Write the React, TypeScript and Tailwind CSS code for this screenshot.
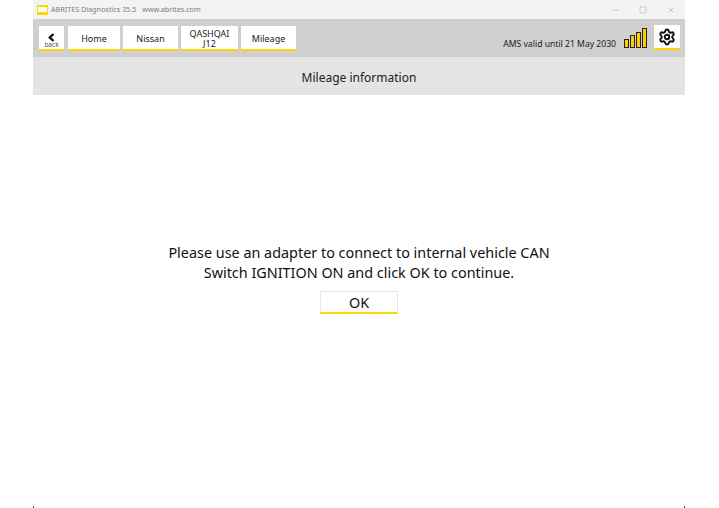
import { Minus, Settings, Square, X } from 'lucide-react';

const crumbs = [
   { label: 'Home', width: 'w-[52px]' },
   { label: 'Nissan', width: 'w-[55px]' },
   { label: 'QASHQAI J12', width: 'w-[57px]' },
   { label: 'Mileage', width: 'w-[55px]' },
];

const bars = ['h-[9px]', 'h-[13px]', 'h-[16px]', 'h-[20px]'];

export default function App() {
   return (
      <div className="h-[508px] w-[719px] bg-white pl-[33px] pr-[34px] font-['Noto_Sans',sans-serif] text-[#222]">
         <div className="relative flex h-[508px] flex-col">
            {/* Title bar */}
            <div className="flex h-[19px] items-center bg-[#f3f3f3] pl-[4px]">
               <div className="flex h-[10px] w-[11px] items-center justify-center rounded-[1px] border-x border-t-2 border-b-[3px] border-[#fdd800] bg-white" />
               <span className="ml-[3px] text-[7.2px] text-[#7c7c7c]">ABRITES Diagnostics 35.5</span>
               <span className="ml-[6px] text-[7.2px] text-[#7c7c7c]">www.abrites.com</span>
               <div className="ml-auto flex items-center text-[#8c8c8c]">
                  <Minus size={10} strokeWidth={1} />
                  <Square size={8} strokeWidth={1} className="ml-[19px]" />
                  <X size={10} strokeWidth={1} className="ml-[19px] mr-[9px]" />
               </div>
            </div>

            {/* Toolbar */}
            <div className="flex h-[38px] items-center bg-[#cfcfcf] pl-[6px] pr-[5px]">
               <button className="flex h-[25px] w-[25px] flex-col items-center justify-end border-b-2 border-[#fdd800] bg-white">
                  <svg width="7" height="9" viewBox="0 0 7 9" className="mb-[-1px]">
                     <path d="M5.5 1 L1.8 4.5 L5.5 8" fill="none" stroke="#111" strokeWidth="2.4" />
                  </svg>
                  <span className="text-[6.5px] leading-[8px] text-[#556]">back</span>
               </button>
               <div className="ml-[4px] flex gap-[3px]">
                  {crumbs.map((crumb) => (
                     <button
                        key={crumb.label}
                        className={`flex h-[25px] items-center justify-center border-b-2 border-[#fdd800] bg-white px-[6px] pt-[4px] text-center text-[9px] leading-[10px] ${crumb.width}`}
                     >
                        {crumb.label}
                     </button>
                  ))}
               </div>
               <div className="ml-auto flex items-center">
                  <span className="mt-[13px] text-[8.6px] text-[#222]">AMS valid until 21 May 2030</span>
                  <div className="ml-[8px] flex h-[20px] items-end gap-[1px]">
                     {bars.map((bar) => (
                        <div key={bar} className={`w-[5px] border border-[#222] bg-[#fdd000] ${bar}`} />
                     ))}
                  </div>
                  <button className="ml-[7px] flex h-[25px] w-[26px] items-center justify-center border-b-2 border-[#fdd800] bg-white">
                     <Settings size={18} strokeWidth={2.6} color="#111" />
                  </button>
               </div>
            </div>

            {/* Page header */}
            <div className="flex h-[38px] items-center justify-center bg-[#e4e4e4] pt-[3px] text-[12px]">
               Mileage information
            </div>

            {/* Message */}
            <div className="flex flex-col items-center pt-[148px]">
               <p className="text-center text-[14.4px] leading-[20px] text-[#111]">
                  Please use an adapter to connect to internal vehicle CAN
                  <br />
                  Switch IGNITION ON and click OK to continue.
               </p>
               <button className="mt-[8px] h-[23px] w-[78px] border border-[#e6e6e6] border-b-2 border-b-[#fdd800] bg-white pt-[1px] text-[14.4px] leading-[20px] text-[#111]">
                  OK
               </button>
            </div>

            {/* Window corner ticks */}
            <div className="absolute bottom-0 left-0 h-[2px] w-px bg-[#555]" />
            <div className="absolute bottom-0 right-0 h-[2px] w-px bg-[#555]" />
         </div>
      </div>
   );
}
